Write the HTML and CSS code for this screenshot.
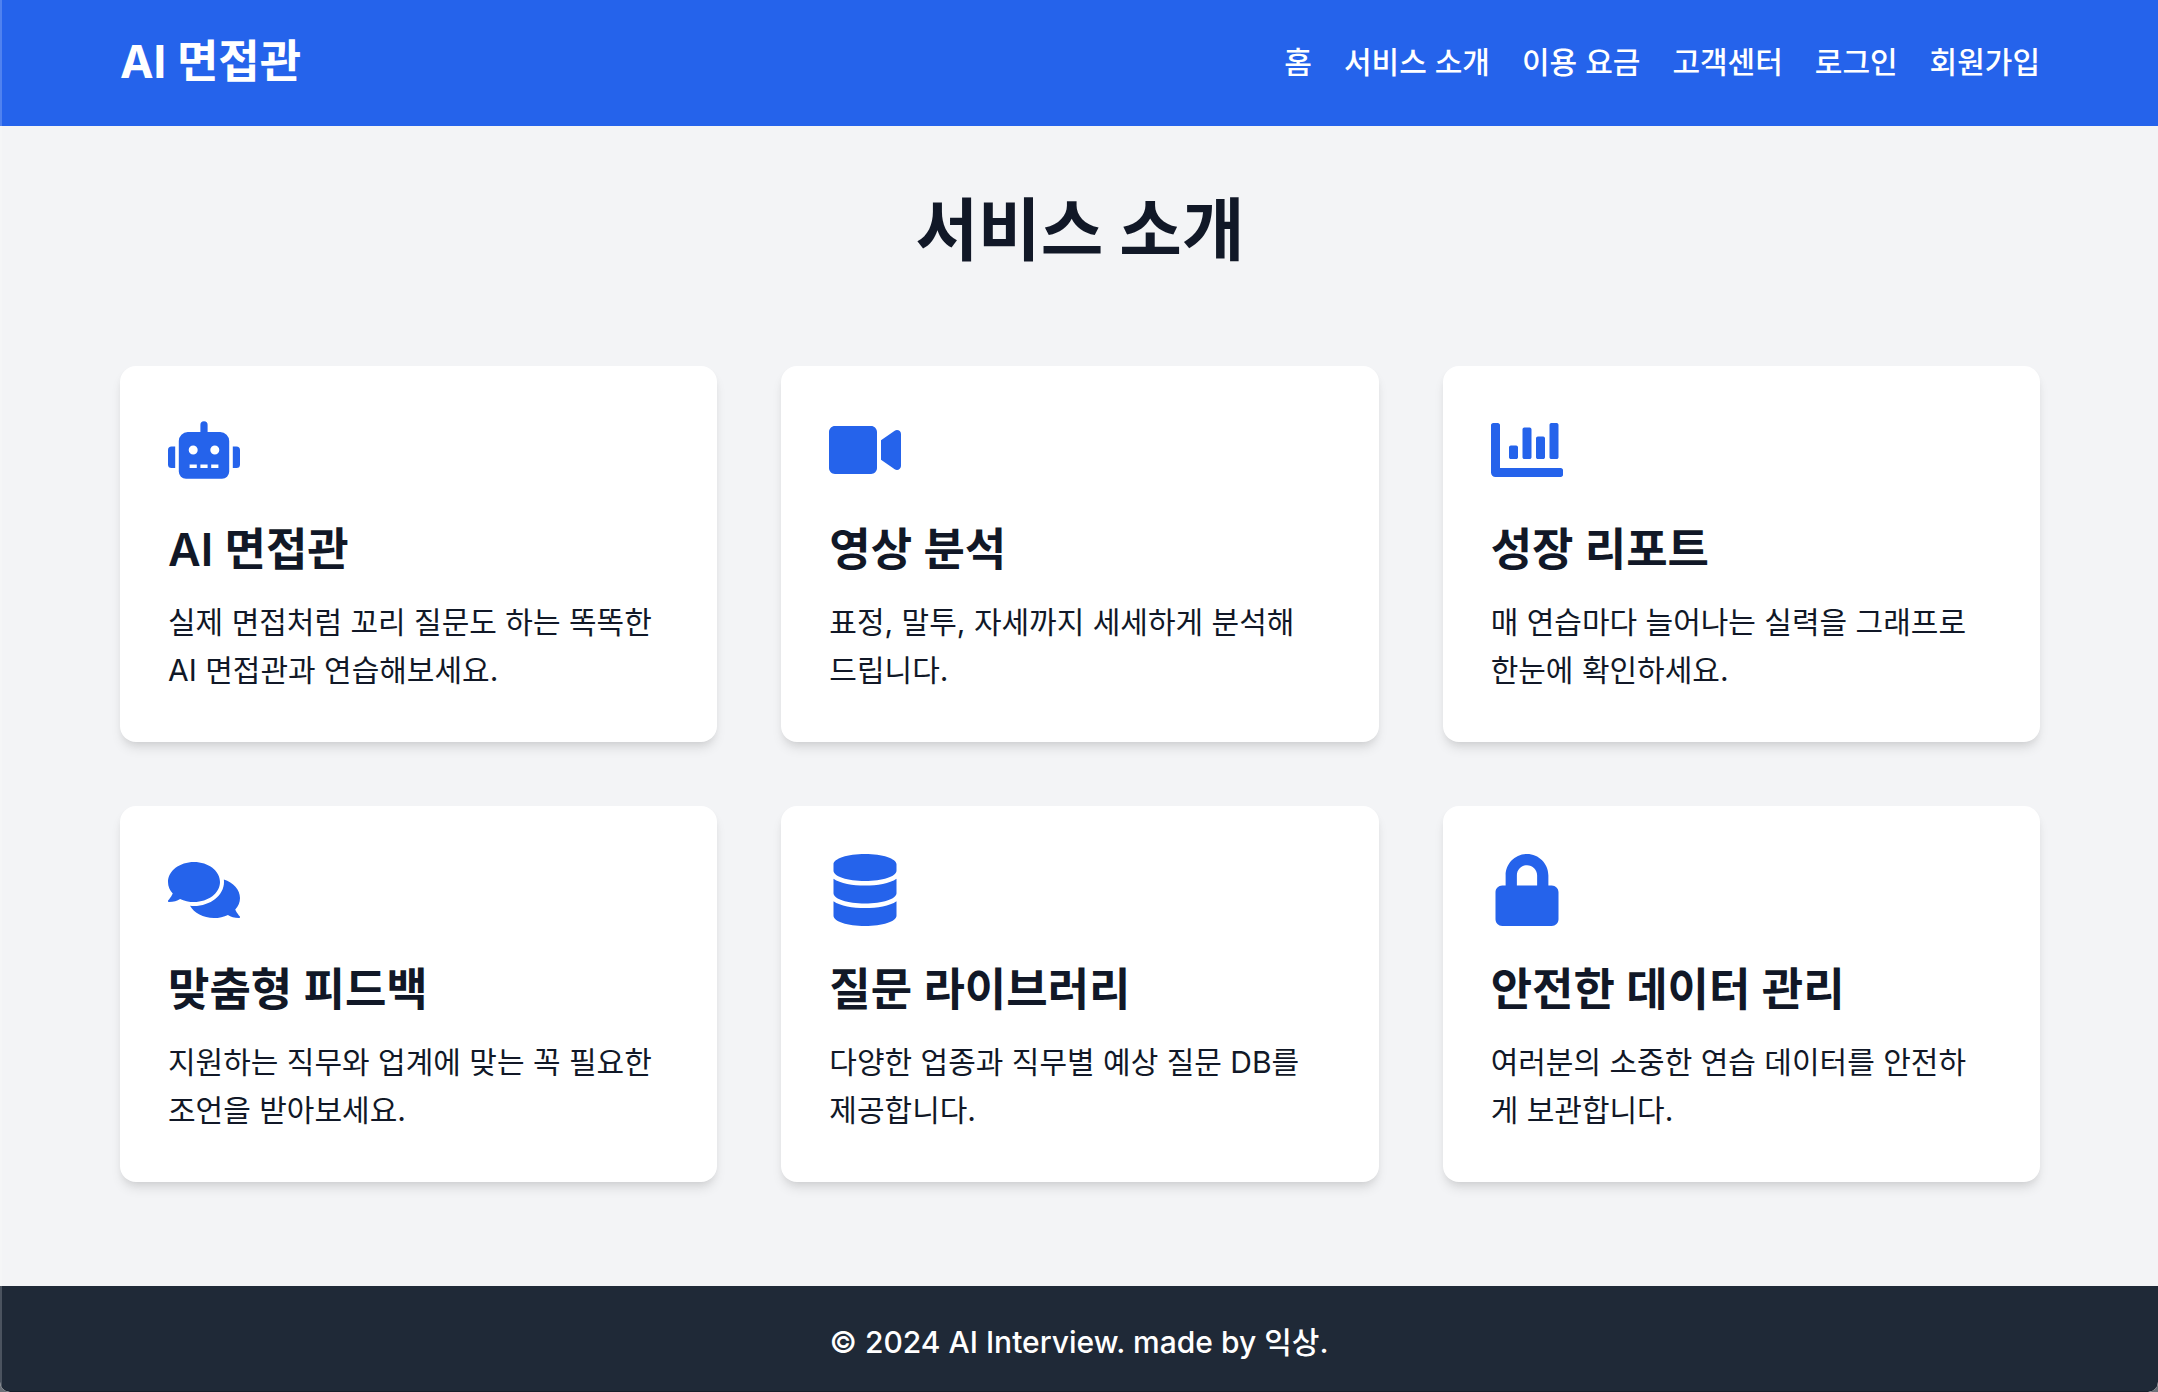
FILE: index.html
```html
<!DOCTYPE html>
<html lang="ko">
<head>
<meta charset="utf-8">
<meta name="viewport" content="width=device-width, initial-scale=1">
<title>AI 면접관 - 서비스 소개</title>
<link rel="stylesheet" href="styles.css">
</head>
<body>
<header class="site-header">
  <div class="container header-inner">
    <a class="logo" href="#">AI 면접관</a>
    <nav class="nav">
      <a href="#">홈</a>
      <a href="#">서비스 소개</a>
      <a href="#">이용 요금</a>
      <a href="#">고객센터</a>
      <a href="#">로그인</a>
      <a href="#">회원가입</a>
    </nav>
  </div>
</header>
<main class="container main">
  <h1 class="page-title">서비스 소개</h1>
  <div class="cards">
    <section class="card">
      <svg class="icon" viewBox="0 0 640 512" aria-hidden="true"><path d="M32,224H64V416H32A31.96166,31.96166,0,0,1,0,384V256A31.96166,31.96166,0,0,1,32,224Zm512-48V448a64.06328,64.06328,0,0,1-64,64H160a64.06328,64.06328,0,0,1-64-64V176a79.974,79.974,0,0,1,80-80H288V32a32,32,0,0,1,64,0V96H464A79.974,79.974,0,0,1,544,176ZM264,256a40,40,0,1,0-40,40A39.997,39.997,0,0,0,264,256Zm-8,128H192v32h64Zm96,0H288v32h64ZM456,256a40,40,0,1,0-40,40A39.997,39.997,0,0,0,456,256Zm-8,128H384v32h64ZM640,256V384a31.96166,31.96166,0,0,1-32,32H576V224h32A31.96166,31.96166,0,0,1,640,256Z"/></svg>
      <h2 class="card-title">AI 면접관</h2>
      <p class="card-text">실제 면접처럼 꼬리 질문도 하는 똑똑한 AI 면접관과 연습해보세요.</p>
    </section>
    <section class="card">
      <svg class="icon" viewBox="0 0 576 512" aria-hidden="true"><path d="M336.2 64H47.8C21.4 64 0 85.4 0 111.8v288.4C0 426.6 21.4 448 47.8 448h288.4c26.4 0 47.8-21.4 47.8-47.8V111.8c0-26.4-21.4-47.8-47.8-47.8zm189.4 37.7L416 177.3v157.4l109.6 75.5c21.2 14.6 50.4-.3 50.4-25.8V127.5c0-25.4-29.1-40.4-50.4-25.8z"/></svg>
      <h2 class="card-title">영상 분석</h2>
      <p class="card-text">표정, 말투, 자세까지 세세하게 분석해 <span class="phrase">드립니다.</span></p>
    </section>
    <section class="card">
      <svg class="icon" viewBox="0 0 512 512" aria-hidden="true"><path d="M332.8 320h38.4c6.4 0 12.8-6.4 12.8-12.8V172.8c0-6.4-6.4-12.8-12.8-12.8h-38.4c-6.4 0-12.8 6.4-12.8 12.8v134.4c0 6.4 6.4 12.8 12.8 12.8zm96 0h38.4c6.4 0 12.8-6.4 12.8-12.8V76.8c0-6.4-6.4-12.8-12.8-12.8h-38.4c-6.4 0-12.8 6.4-12.8 12.8v230.4c0 6.4 6.4 12.8 12.8 12.8zm-288 0h38.4c6.4 0 12.8-6.4 12.8-12.8v-70.4c0-6.4-6.4-12.8-12.8-12.8h-38.4c-6.4 0-12.8 6.4-12.8 12.8v70.4c0 6.4 6.4 12.8 12.8 12.8zm96 0h38.4c6.4 0 12.8-6.4 12.8-12.8V108.8c0-6.4-6.4-12.8-12.8-12.8h-38.4c-6.4 0-12.8 6.4-12.8 12.8v198.4c0 6.4 6.4 12.8 12.8 12.8zM496 384H64V80c0-8.84-7.16-16-16-16H16C7.16 64 0 71.16 0 80v336c0 17.67 14.33 32 32 32h464c8.84 0 16-7.16 16-16v-32c0-8.84-7.16-16-16-16z"/></svg>
      <h2 class="card-title">성장 리포트</h2>
      <p class="card-text">매 연습마다 늘어나는 실력을 그래프로 한눈에 확인하세요.</p>
    </section>
    <section class="card">
      <svg class="icon" viewBox="0 0 576 512" aria-hidden="true"><path d="M416 192c0-88.4-93.1-160-208-160S0 103.6 0 192c0 34.3 14.1 65.9 38 92-13.4 30.2-35.5 54.2-35.8 54.5-2.2 2.3-2.8 5.7-1.5 8.7S4.8 352 8 352c36.6 0 66.9-12.3 88.7-25 32.2 15.7 70.3 25 111.3 25 114.9 0 208-71.6 208-160zm122 220c23.9-26 38-57.7 38-92 0-66.9-53.5-124.2-129.3-148.1.9 6.6 1.3 13.3 1.3 20.1 0 105.9-107.7 192-240 192-10.8 0-21.3-.8-31.7-1.9C207.8 439.6 281.8 480 368 480c41 0 79.1-9.2 111.3-25 21.8 12.7 52.1 25 88.7 25 3.2 0 6.1-1.9 7.3-4.8 1.3-2.9.7-6.3-1.5-8.7-.3-.3-22.4-24.2-35.8-54.5z"/></svg>
      <h2 class="card-title">맞춤형 피드백</h2>
      <p class="card-text">지원하는 직무와 업계에 맞는 꼭 필요한 조언을 받아보세요.</p>
    </section>
    <section class="card">
      <svg class="icon" viewBox="0 0 448 512" aria-hidden="true"><path d="M448 73.143v45.714C448 159.143 347.667 192 224 192S0 159.143 0 118.857V73.143C0 32.857 100.333 0 224 0s224 32.857 224 73.143zM448 176v102.857C448 319.143 347.667 352 224 352S0 319.143 0 278.857V176c48.125 33.143 136.208 48.572 224 48.572S399.874 209.143 448 176zm0 160v102.857C448 479.143 347.667 512 224 512S0 479.143 0 438.857V336c48.125 33.143 136.208 48.572 224 48.572S399.874 369.143 448 336z"/></svg>
      <h2 class="card-title">질문 라이브러리</h2>
      <p class="card-text">다양한 업종과 직무별 예상 질문 DB를 제공합니다.</p>
    </section>
    <section class="card">
      <svg class="icon" viewBox="0 0 448 512" aria-hidden="true"><path d="M400 224h-24v-72C376 68.2 307.8 0 224 0S72 68.2 72 152v72H48c-26.5 0-48 21.5-48 48v192c0 26.5 21.5 48 48 48h352c26.5 0 48-21.5 48-48V272c0-26.5-21.5-48-48-48zm-104 0H152v-72c0-39.7 32.3-72 72-72s72 32.3 72 72v72z"/></svg>
      <h2 class="card-title">안전한 데이터 관리</h2>
      <p class="card-text">여러분의 소중한 연습 데이터를 안전하게 보관합니다.</p>
    </section>
  </div>
</main>
<footer class="site-footer">
  <p>© 2024 AI Interview. made by 익상.</p>
</footer>
</body>
</html>
```
FILE: styles.css
```css
*,
*::before {
  box-sizing: border-box;
}

html {
  background: #6b7078;
}

body {
  position: relative;
  margin: 0;
  min-height: 100vh;
  display: flex;
  flex-direction: column;
  border-radius: 0 0 10px 10px;
  background: #f3f4f6;
  color: #111827;
  font-family: "Inter", "Noto Sans CJK KR", sans-serif;
  font-size: 30px;
  line-height: 48px;
}

/* light line down the window's left edge */
body::before {
  content: "";
  position: absolute;
  inset: 0 auto 0 0;
  width: 2px;
  background: rgba(255, 255, 255, 0.2);
}

h1,
h2,
p {
  margin: 0;
}

a {
  color: inherit;
  text-decoration: none;
}

.container {
  width: 100%;
  max-width: 2050px;
  margin: 0 auto;
  padding: 0 64px 0 66px;
}

.site-header {
  background: #2563eb;
  color: #fff;
  padding: 30px 0 32px;
}

.header-inner {
  display: flex;
  flex-wrap: wrap;
  align-items: center;
  justify-content: space-between;
}

.logo {
  font-size: 45px;
  font-weight: 700;
  line-height: 64px;
}

.nav {
  display: flex;
  flex-wrap: wrap;
  gap: 0 32px;
  font-weight: 500;
}

.main {
  flex: 1;
  padding-top: 64px;
  padding-bottom: 104px;
}

.page-title {
  margin-bottom: 96px;
  font-size: 68px;
  font-weight: 700;
  line-height: 80px;
  text-align: center;
}

.cards {
  display: grid;
  grid-template-columns: repeat(auto-fit, minmax(min(480px, 100%), 1fr));
  gap: 64px;
}

.card {
  padding: 48px;
  border-radius: 16px;
  background: #fff;
  box-shadow: 0 8px 12px -2px rgba(0, 0, 0, 0.1), 0 4px 8px -4px rgba(0, 0, 0, 0.1);
}

.icon {
  display: block;
  width: 72px;
  height: 72px;
  fill: #2563eb;
}

.card-title {
  margin: 32px 0 16px;
  font-size: 45px;
  font-weight: 600;
  line-height: 64px;
}

.phrase {
  white-space: nowrap;
}

.site-footer {
  padding: 32px 32px 25px;
  border-bottom: 1px solid #161d29;
  border-radius: 0 0 10px 10px;
  background: #1f2937;
  color: #fff;
  font-weight: 500;
  text-align: center;
}
```
